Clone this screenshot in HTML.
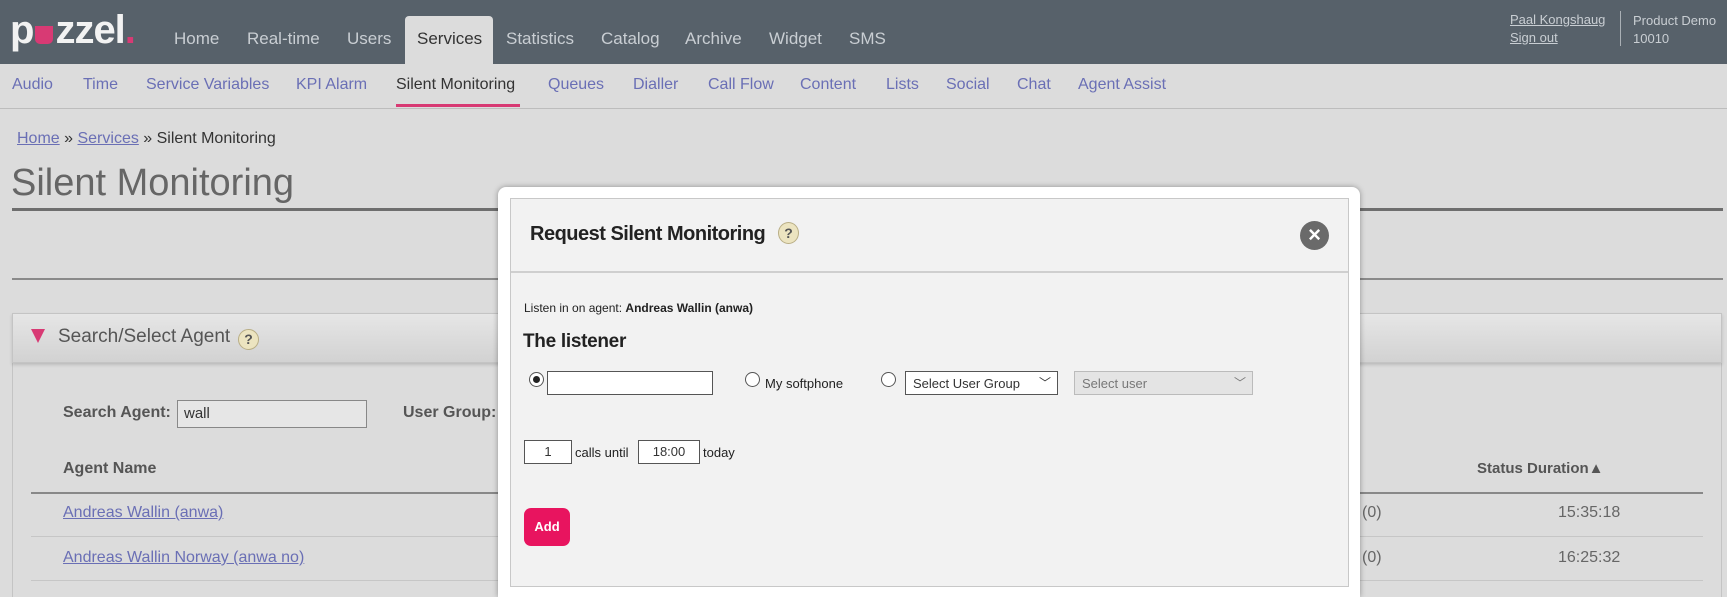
<!DOCTYPE html>
<html><head><meta charset="utf-8"><style>
*{box-sizing:border-box;margin:0;padding:0}
html,body{width:1727px;height:597px;overflow:hidden}
body{background:#dcdcdc;font-family:"Liberation Sans",sans-serif;color:#333}
#w{position:relative;width:1727px;height:597px;overflow:hidden}
.a{position:absolute;white-space:nowrap}
.hdr{position:absolute;left:0;top:0;width:1727px;height:64px;background:#57616a}
.nav{color:#c9ced3;font-size:17px;top:29px}
.sub{color:#6a6fb5;font-size:16px;top:76px}
.link{color:#6a6fb5;text-decoration:underline}
.help{position:absolute;border-radius:50%;background:#ece4c0;border:1px solid #b9ae85;color:#555;font-weight:bold;text-align:center}
</style></head><body><div id="w">
<div class="hdr"></div>
<div class="a" style="left:10px;top:8px;font-size:40px;font-weight:bold;color:#f2f2f2;letter-spacing:-1px">p<span style="display:inline-block;width:18px;height:18px;background:#d83a74;border-radius:0 0 5px 5px;vertical-align:-1px;margin:0 2px"></span>zzel<span style="color:#d83a74">.</span></div>
<div class="a nav" style="left:174px">Home</div>
<div class="a nav" style="left:247px">Real-time</div>
<div class="a" style="left:405px;top:16px;width:88px;height:48px;background:#dcdcdc;border-radius:4px 4px 0 0"></div>
<div class="a nav" style="left:347px">Users</div>
<div class="a nav" style="left:417px;color:#333">Services</div>
<div class="a nav" style="left:506px">Statistics</div>
<div class="a nav" style="left:601px">Catalog</div>
<div class="a nav" style="left:685px">Archive</div>
<div class="a nav" style="left:769px">Widget</div>
<div class="a nav" style="left:849px">SMS</div>
<div class="a link" style="left:1510px;top:12px;font-size:13px;color:#c9ced3">Paal Kongshaug</div>
<div class="a link" style="left:1510px;top:30px;font-size:13px;color:#c9ced3">Sign out</div>
<div class="a" style="left:1620px;top:11px;width:1px;height:35px;background:#aab0b5"></div>
<div class="a" style="left:1633px;top:12px;font-size:13px;color:#c9ced3;line-height:18px">Product Demo<br>10010</div>

<div class="a sub" style="left:12px">Audio</div>
<div class="a sub" style="left:83px">Time</div>
<div class="a sub" style="left:146px">Service Variables</div>
<div class="a sub" style="left:296px">KPI Alarm</div>
<div class="a sub" style="left:396px;color:#333">Silent Monitoring</div>
<div class="a sub" style="left:548px">Queues</div>
<div class="a sub" style="left:633px">Dialler</div>
<div class="a sub" style="left:708px">Call Flow</div>
<div class="a sub" style="left:800px">Content</div>
<div class="a sub" style="left:886px">Lists</div>
<div class="a sub" style="left:946px">Social</div>
<div class="a sub" style="left:1017px">Chat</div>
<div class="a sub" style="left:1078px">Agent Assist</div>
<div class="a" style="left:396px;top:104px;width:124px;height:3px;background:#d83a74"></div>
<div class="a" style="left:0;top:108px;width:1727px;height:1px;background:#bdbdbd"></div>

<div class="a" style="left:17px;top:130px;font-size:16px"><span class="link">Home</span> » <span class="link">Services</span> » Silent Monitoring</div>
<div class="a" style="left:11px;top:162px;font-size:38px;color:#666">Silent Monitoring</div>
<div class="a" style="left:12px;top:208px;width:1711px;height:3px;background:#6e6e6e"></div>
<div class="a" style="left:12px;top:278px;width:1711px;height:2px;background:#8a8a8a"></div>

<div class="a" style="left:12px;top:313px;width:1710px;height:284px;border:1px solid #c4c4c4;border-bottom:none"></div>
<div class="a" style="left:12px;top:313px;width:1710px;height:50px;background:linear-gradient(#e6e6e6,#d2d2d2);border:1px solid #c4c4c4;box-shadow:0 2px 3px rgba(0,0,0,.15)"></div>
<div class="a" style="left:31px;top:329px;width:0;height:0;border-left:7px solid transparent;border-right:7px solid transparent;border-top:14px solid #d83a74"></div>
<div class="a" style="left:58px;top:326px;font-size:19px;color:#555">Search/Select Agent</div>
<div class="help" style="left:238px;top:329px;width:21px;height:21px;font-size:14px;line-height:19px">?</div>

<div class="a" style="left:63px;top:404px;font-size:16px;color:#555;font-weight:bold">Search Agent:</div>
<div class="a" style="left:177px;top:400px;width:190px;height:28px;background:#e6e6e6;border:1px solid #888;font-size:15px;padding:4px 6px">wall</div>
<div class="a" style="left:403px;top:404px;font-size:16px;color:#555;font-weight:bold">User Group:</div>
<div class="a" style="left:63px;top:460px;font-size:16px;color:#555;font-weight:bold">Agent Name</div>
<div class="a" style="left:1477px;top:460px;font-size:15px;color:#555;font-weight:bold">Status Duration▲</div>
<div class="a" style="left:31px;top:492px;width:1672px;height:2px;background:#888"></div>
<div class="a link" style="left:63px;top:504px;font-size:16px">Andreas Wallin (anwa)</div>
<div class="a" style="left:31px;top:536px;width:1672px;height:1px;background:#c6c6c6"></div>
<div class="a link" style="left:63px;top:549px;font-size:16px">Andreas Wallin Norway (anwa no)</div>
<div class="a" style="left:31px;top:580px;width:1672px;height:1px;background:#c6c6c6"></div>
<div class="a" style="left:1362px;top:504px;font-size:16px;color:#666">(0)</div>
<div class="a" style="left:1558px;top:504px;font-size:16px;color:#666">15:35:18</div>
<div class="a" style="left:1362px;top:549px;font-size:16px;color:#666">(0)</div>
<div class="a" style="left:1558px;top:549px;font-size:16px;color:#666">16:25:32</div>

<div class="a" style="left:498px;top:187px;width:862px;height:410px;background:#fff;border-radius:8px 8px 0 0;box-shadow:0 0 6px rgba(0,0,0,.35)"></div>
<div class="a" style="left:510px;top:198px;width:839px;height:389px;background:#f2f2f2;border:1px solid #c8c8c8"></div>
<div class="a" style="left:511px;top:271px;width:837px;height:2px;background:#cfcfcf"></div>
<div class="a" style="left:530px;top:223px;font-size:20px;color:#222;font-weight:bold;letter-spacing:-.5px">Request Silent Monitoring</div>
<div class="help" style="left:778px;top:222px;width:21px;height:22px;font-size:14px;line-height:20px">?</div>
<div class="a" style="left:1300px;top:221px;width:29px;height:29px;border-radius:50%;background:#6a6a6a;color:#fff;font-size:22px;font-weight:bold;text-align:center;line-height:28px">×</div>
<div class="a" style="left:524px;top:301px;font-size:12px;color:#222">Listen in on agent: <b>Andreas Wallin (anwa)</b></div>
<div class="a" style="left:523px;top:331px;font-size:19px;color:#222;font-weight:bold;letter-spacing:-.3px">The listener</div>
<div class="a" style="left:529px;top:372px;width:15px;height:15px;border:1px solid #555;border-radius:50%;background:#fff"><div style="margin:3px;width:7px;height:7px;border-radius:50%;background:#222"></div></div>
<div class="a" style="left:547px;top:371px;width:166px;height:24px;background:#fff;border:1px solid #555"></div>
<div class="a" style="left:745px;top:372px;width:15px;height:15px;border:1px solid #555;border-radius:50%;background:#fff"></div>
<div class="a" style="left:765px;top:376px;font-size:13px;color:#222">My softphone</div>
<div class="a" style="left:881px;top:372px;width:15px;height:15px;border:1px solid #555;border-radius:50%;background:#fff"></div>
<div class="a" style="left:905px;top:371px;width:153px;height:24px;background:#fff;border:1px solid #555;font-size:13px;padding:4px 7px">Select User Group <span style="position:absolute;right:6px;top:2px;font-size:12px">﹀</span></div>
<div class="a" style="left:1074px;top:371px;width:179px;height:24px;background:#e4e4e4;border:1px solid #bbb;font-size:13px;padding:4px 7px;color:#777">Select user<span style="position:absolute;right:6px;top:2px;font-size:12px">﹀</span></div>
<div class="a" style="left:524px;top:440px;width:48px;height:24px;background:#fff;border:1px solid #555;font-size:13px;text-align:center;line-height:22px">1</div>
<div class="a" style="left:575px;top:445px;font-size:13px;color:#222">calls until</div>
<div class="a" style="left:638px;top:440px;width:62px;height:24px;background:#fff;border:1px solid #555;font-size:13px;text-align:center;line-height:22px">18:00</div>
<div class="a" style="left:703px;top:445px;font-size:13px;color:#222">today</div>
<div class="a" style="left:524px;top:508px;width:46px;height:38px;background:#e8145f;border-radius:7px;color:#fff;font-size:13px;font-weight:bold;text-align:center;line-height:38px">Add</div>
</div></body></html>
